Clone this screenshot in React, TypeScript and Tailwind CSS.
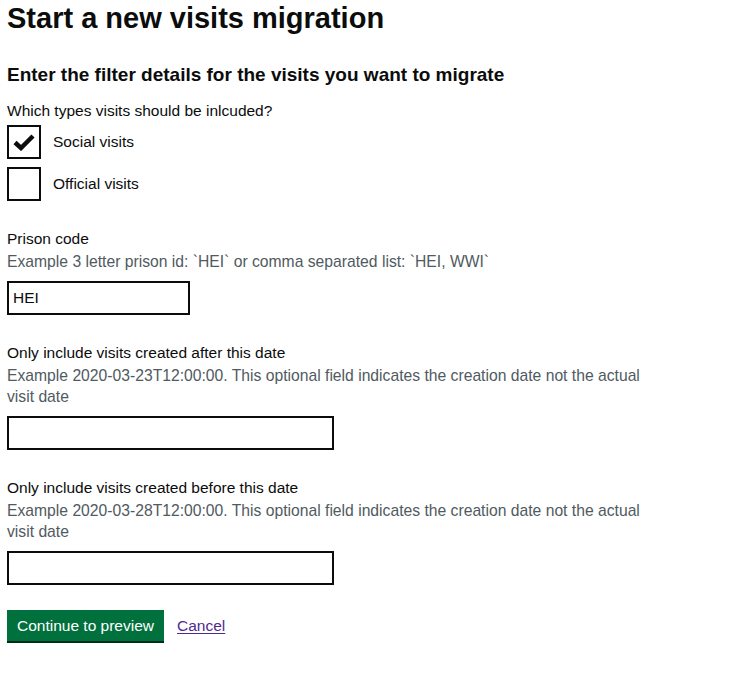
import React, { useState } from "react";

const font = "font-['Liberation_Sans',Arial,sans-serif]";

const Field = ({
  label,
  hint,
  value,
  width,
}: {
  label: string;
  hint: string;
  value: string;
  width: string;
}) => {
  const [val, setVal] = useState(value);
  return (
    <div className="flex flex-col mt-[28px]">
      <label className="text-[15.5px] leading-[20px] text-[#0b0c0c]">{label}</label>
      <div className="mt-[2px] max-w-[650px] text-[15.7px] leading-[21px] text-[#505a5f]">{hint}</div>
      <input
        value={val}
        onChange={(e) => setVal(e.target.value)}
        className={`mt-[9px] h-[34px] ${width} border-2 border-[#0b0c0c] px-[4px] text-[15.5px] text-[#0b0c0c] outline-none`}
      />
    </div>
  );
};

const Checkbox = ({ label, checked }: { label: string; checked: boolean }) => {
  const [on, setOn] = useState(checked);
  return (
    <div className="flex items-center gap-[12px] cursor-pointer" onClick={() => setOn(!on)}>
      <div className="w-[34px] h-[34px] border-2 border-[#0b0c0c] flex items-center justify-center">
        {on && (
          <svg width="22" height="18" viewBox="0 0 22 18">
            <path d="M2 9.5 L8 15 L20 3" fill="none" stroke="#0b0c0c" strokeWidth="4.5" />
          </svg>
        )}
      </div>
      <span className="text-[15.5px] leading-[20px] text-[#0b0c0c]">{label}</span>
    </div>
  );
};

export default function App() {
  return (
    <div className={`${font} p-[7px] pt-[2px] bg-white min-h-screen text-[#0b0c0c]`}>
      <h1 className="text-[29px] leading-[33px] font-bold">Start a new visits migration</h1>
      <h2 className="mt-[27px] text-[19px] leading-[25px] font-bold">
        Enter the filter details for the visits you want to migrate
      </h2>
      <p className="mt-[14px] text-[15.5px] leading-[20px]">Which types visits should be inlcuded?</p>
      <div className="mt-[4px] flex flex-col gap-[8px]">
        <Checkbox label="Social visits" checked={true} />
        <Checkbox label="Official visits" checked={false} />
      </div>
      <Field
        label="Prison code"
        hint="Example 3 letter prison id: `HEI` or comma separated list: `HEI, WWI`"
        value="HEI"
        width="w-[183px]"
      />
      <Field
        label="Only include visits created after this date"
        hint="Example 2020-03-23T12:00:00. This optional field indicates the creation date not the actual visit date"
        value=""
        width="w-[327px]"
      />
      <Field
        label="Only include visits created before this date"
        hint="Example 2020-03-28T12:00:00. This optional field indicates the creation date not the actual visit date"
        value=""
        width="w-[327px]"
      />
      <div className="mt-[25px] flex items-center gap-[13px]">
        <button className="h-[31px] px-[10px] bg-[#00703c] text-white text-[15.5px] leading-[20px] shadow-[0_2px_0_#002d18]">
          Continue to preview
        </button>
        <a href="#" className="text-[15.5px] leading-[20px] text-[#4c2c92] underline underline-offset-2">
          Cancel
        </a>
      </div>
    </div>
  );
}
